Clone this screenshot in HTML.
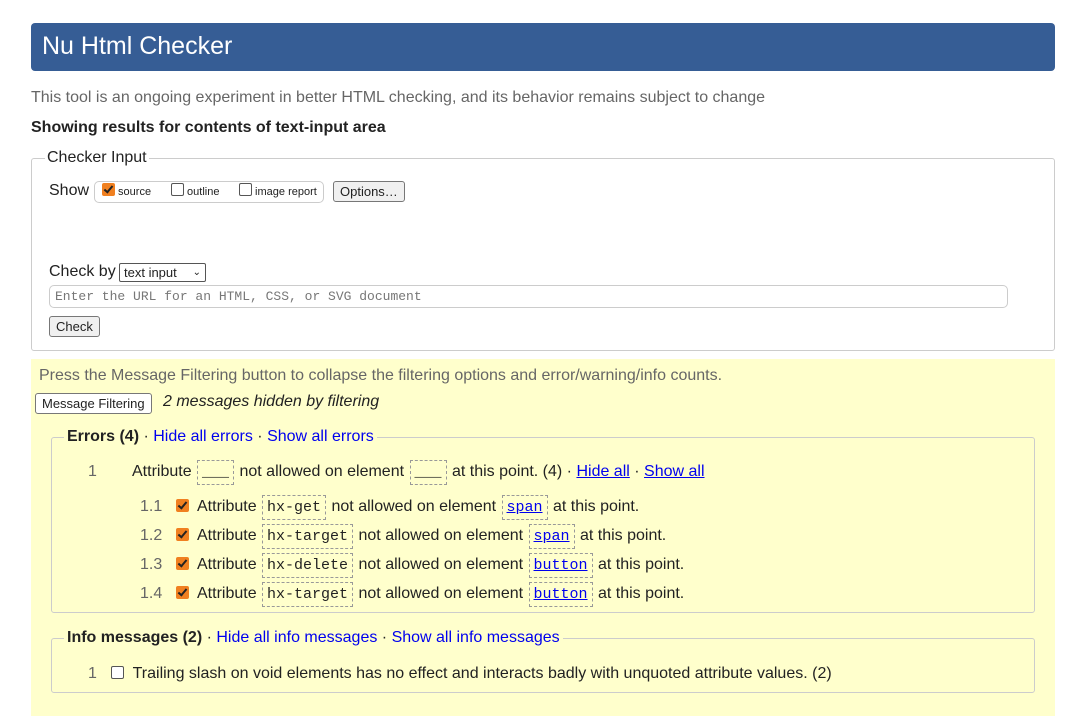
<!DOCTYPE html>
<html><head><style>
body{margin:0;background:#fff;font-family:"Liberation Sans",Arial,sans-serif;color:#222;width:1086px;height:721px;overflow:hidden;position:relative}
.a{position:absolute;white-space:nowrap}
.hdr{left:31px;top:23px;width:1024px;height:48px;background:#365d95;border-radius:4px}
.hdr span{position:absolute;left:11px;top:9px;color:#fff;font-size:25px}
.fs{left:31px;top:158px;width:1022px;height:191px;border:1px solid #ccc;border-radius:3px}
.lg{background:#fff;padding:0 2px;font-size:16px}
.btn{border:1px solid #777;border-radius:3px;background:#f0f0f0;font-size:13px;padding:2px 6px}
.cb{display:inline-block;width:11px;height:11px;border:1px solid #555;border-radius:2px;background:#fff;vertical-align:-1px}
.cbo{display:inline-block;width:13px;height:13px;background:#f08020;border-radius:2px;vertical-align:-1px;position:relative}
.cbo:after{content:"";position:absolute;left:4px;top:1px;width:3px;height:7px;border:solid #222;border-width:0 2px 2px 0;transform:rotate(40deg)}
.yel{left:31px;top:359px;width:1024px;height:357px;background:#ffffcc}
.grp{border:1px solid #ccc;border-radius:3px}
.lk{color:#00e}
.ul{color:#00e;text-decoration:underline}
.code{font-family:"Liberation Mono",monospace;border:1px dashed #999;padding:3px 4px;font-size:15px;margin:0 1px}
.n{color:#666}
.t{font-size:16px}
</style></head><body>
<div class="a hdr"><span>Nu Html Checker</span></div>
<div class="a" style="left:31px;top:89px;font-size:16px;color:#666">This tool is an ongoing experiment in better HTML checking, and its behavior remains subject to change</div>
<div class="a" style="left:31px;top:119px;font-size:16px;font-weight:bold">Showing results for contents of text-input area</div>
<div class="a fs"></div>
<div class="a lg" style="left:45px;top:149px">Checker Input</div>
<div class="a" style="left:49px;top:182px;font-size:16px">Show</div>
<div class="a" style="left:94px;top:181px;width:228px;height:20px;border:1px solid #ccc;border-radius:5px;font-size:11px">
 <span class="a" style="left:7px;top:1px"><span class="cbo"></span> source</span>
 <span class="a" style="left:76px;top:1px"><span class="cb"></span> outline</span>
 <span class="a" style="left:144px;top:1px"><span class="cb"></span> image report</span>
</div>
<div class="a btn" style="left:333px;top:181px">Options…</div>
<div class="a" style="left:49px;top:263px;font-size:16px">Check by</div>
<div class="a" style="left:119px;top:263px;width:81px;height:17px;border:1px solid #555;border-radius:2px;font-size:13px;padding-left:4px;line-height:17px">text input <span style="position:absolute;right:4px;font-size:10px">&#8964;</span></div>
<div class="a" style="left:49px;top:285px;width:957px;height:21px;border:1px solid #ccc;border-radius:5px"></div>
<div class="a" style="left:55px;top:289px;font-family:'Liberation Mono',monospace;font-size:13px;color:#777">Enter the URL for an HTML, CSS, or SVG document</div>
<div class="a btn" style="left:49px;top:316px">Check</div>
<div class="a yel"></div>
<div class="a" style="left:39px;top:367px;font-size:16px;color:#666">Press the Message Filtering button to collapse the filtering options and error/warning/info counts.</div>
<div class="a btn" style="left:35px;top:393px;background:#fff">Message Filtering</div>
<div class="a" style="left:163px;top:393px;font-size:16px;font-style:italic">2 messages hidden by filtering</div>
<div class="a grp" style="left:51px;top:437px;width:982px;height:174px"></div>
<div class="a t" style="left:64px;top:428px;background:#ffffcc;padding:0 3px"><b>Errors (4)</b> · <span class="lk">Hide all errors</span> · <span class="lk">Show all errors</span></div>
<div class="a t" style="left:88px;top:463px"><span class="n">1</span></div>
<div class="a t" style="left:132px;top:463px">Attribute <span class="code">___</span> not allowed on element <span class="code">___</span> at this point. (4) · <span class="ul">Hide all</span> · <span class="ul">Show all</span></div>
<div class="a t" style="left:140px;top:498px"><span class="n">1.1</span></div>
<div class="a t" style="left:176px;top:498px"><span class="cbo"></span>&nbsp; Attribute <span class="code">hx-get</span> not allowed on element <span class="code ul">span</span> at this point.</div>
<div class="a t" style="left:140px;top:527px"><span class="n">1.2</span></div>
<div class="a t" style="left:176px;top:527px"><span class="cbo"></span>&nbsp; Attribute <span class="code">hx-target</span> not allowed on element <span class="code ul">span</span> at this point.</div>
<div class="a t" style="left:140px;top:556px"><span class="n">1.3</span></div>
<div class="a t" style="left:176px;top:556px"><span class="cbo"></span>&nbsp; Attribute <span class="code">hx-delete</span> not allowed on element <span class="code ul">button</span> at this point.</div>
<div class="a t" style="left:140px;top:585px"><span class="n">1.4</span></div>
<div class="a t" style="left:176px;top:585px"><span class="cbo"></span>&nbsp; Attribute <span class="code">hx-target</span> not allowed on element <span class="code ul">button</span> at this point.</div>
<div class="a grp" style="left:51px;top:638px;width:982px;height:53px"></div>
<div class="a t" style="left:64px;top:629px;background:#ffffcc;padding:0 3px"><b>Info messages (2)</b> · <span class="lk">Hide all info messages</span> · <span class="lk">Show all info messages</span></div>
<div class="a t" style="left:88px;top:665px"><span class="n">1</span></div>
<div class="a t" style="left:111px;top:665px"><span class="cb"></span>&nbsp; Trailing slash on void elements has no effect and interacts badly with unquoted attribute values. (2)</div>
</body></html>
